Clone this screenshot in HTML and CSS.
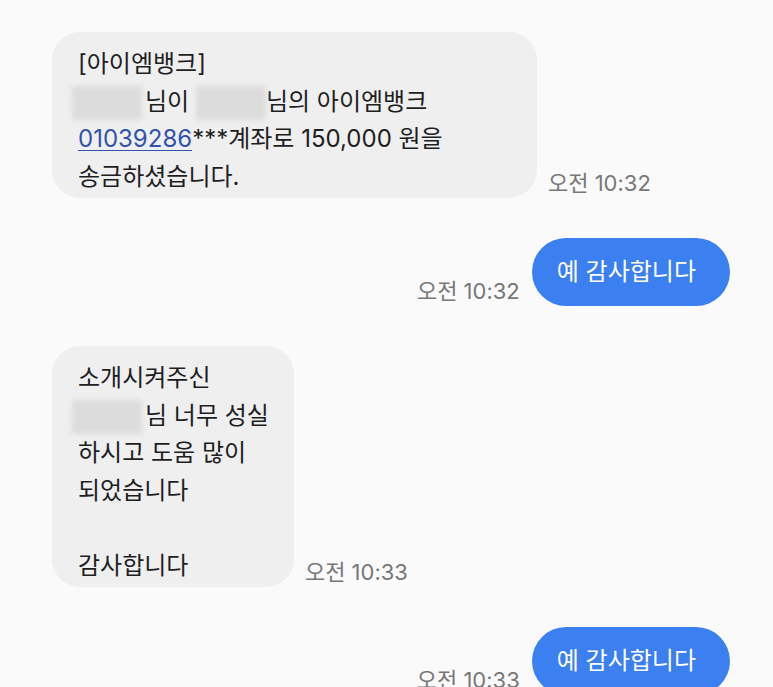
FILE: index.html
```html
<!DOCTYPE html>
<html lang="ko">
<head>
<meta charset="utf-8">
<title>메시지</title>
<link rel="stylesheet" href="styles.css">
</head>
<body>
<main class="chat">
  <div class="row row--in">
    <div class="bubble bubble--in bubble--wide">
      [아이엠뱅크]<br>
      <span class="masked"></span>님이 <span class="masked masked--tight"></span>님의 아이엠뱅크<br>
      <a class="link" href="#">01039286</a>***계좌로 150,000 원을<br>
      송금하셨습니다.
    </div>
    <span class="time">오전 10:32</span>
  </div>

  <div class="row row--out">
    <span class="time">오전 10:32</span>
    <div class="bubble bubble--out">예 감사합니다</div>
  </div>

  <div class="row row--in">
    <div class="bubble bubble--in">
      소개시켜주신<br>
      <span class="masked"></span>님 너무 성실<br>
      하시고 도움 많이<br>
      되었습니다<br>
      <br>
      감사합니다
    </div>
    <span class="time">오전 10:33</span>
  </div>

  <div class="row row--out">
    <span class="time">오전 10:33</span>
    <div class="bubble bubble--out">예 감사합니다</div>
  </div>
</main>
</body>
</html>
```

FILE: styles.css
```css
html, body {
  margin: 0;
  padding: 0;
  background: #fafafa;
  overflow: hidden;
}

body {
  font-family: Inter, "Noto Sans CJK KR", "Noto Sans", sans-serif;
  color: #1e1e1e;
  height: 687px;
}

.chat {
  display: flex;
  flex-direction: column;
  gap: 40px;
  padding: 32px 43px 0 52px;
}

.row {
  display: flex;
  align-items: flex-end;
}

.row--out {
  justify-content: flex-end;
  gap: 12px;
}

.row--in {
  gap: 11px;
}

.bubble {
  font-size: 24px;
  line-height: 37.5px;
}

.bubble--in {
  background: #efeff0;
  border-radius: 28px;
  padding: 13px 25px 3px 26px;
}

.bubble--wide {
  width: 434px;
}

.bubble--out {
  background: #3b7ff0;
  color: #ffffff;
  border-radius: 34px;
  height: 68px;
  box-sizing: border-box;
  padding: 0 34px 0 25px;
  display: flex;
  align-items: center;
}

.time {
  font-size: 22px;
  line-height: 24px;
  color: #777777;
  white-space: nowrap;
  margin-bottom: 3px;
}

.link {
  color: #3152ad;
  text-decoration: underline;
  text-underline-offset: 3px;
  text-decoration-thickness: 1px;
}

.masked {
  display: inline-block;
  width: 70px;
  height: 34px;
  margin-left: -6px;
  margin-right: 3px;
  vertical-align: -10px;
  background: #dcdcdc;
  filter: blur(2.5px);
}

.masked--tight {
  margin-left: 0;
  margin-right: 0;
}
```
